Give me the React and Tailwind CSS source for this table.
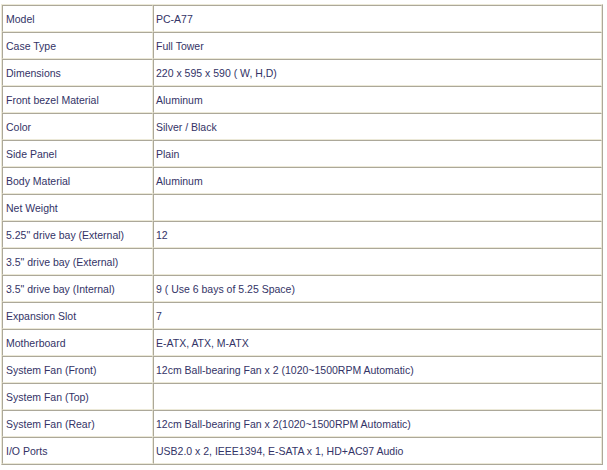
import React from 'react'

const specs = [
    ['Model', 'PC-A77'],
    ['Case Type', 'Full Tower'],
    ['Dimensions', '220 x 595 x 590 ( W, H,D)'],
    ['Front bezel Material', 'Aluminum'],
    ['Color', 'Silver / Black'],
    ['Side Panel', 'Plain'],
    ['Body Material', 'Aluminum'],
    ['Net Weight', ''],
    ['5.25" drive bay (External)', '12'],
    ['3.5" drive bay (External)', ''],
    ['3.5" drive bay (Internal)', '9 ( Use 6 bays of 5.25 Space)'],
    ['Expansion Slot', '7'],
    ['Motherboard', 'E-ATX, ATX, M-ATX'],
    ['System Fan (Front)', '12cm Ball-bearing Fan x 2 (1020~1500RPM Automatic)'],
    ['System Fan (Top)', ''],
    ['System Fan (Rear)', '12cm Ball-bearing Fan x 2(1020~1500RPM Automatic)'],
    ['I/O Ports', 'USB2.0 x 2, IEEE1394, E-SATA x 1, HD+AC97 Audio'],
]

const cell = 'h-[27px] p-0 pl-[2px] pt-[2px] align-middle border border-t-[#aca899] border-l-[#aca899] border-b-[#ece9d8] border-r-[#ece9d8]'

const App = () => {
    return (
        <div className="bg-white min-h-[470px] pt-[4px] pl-[1px]" style={{ fontFamily: '"Liberation Sans", Arial, sans-serif' }}>
            {/* spec table */}
            <table className="w-[602px] border-separate border-spacing-0 border border-t-[#ece9d8] border-l-[#ece9d8] border-b-[#aca899] border-r-[#aca899] text-[10.5px] text-[#333366]">
                <tbody>
                    {specs.map(([label, value], index) => (
                        <tr key={index}>
                            <td className={`${cell} w-[151px] pl-[3px]`}>{label}</td>
                            <td className={cell}>{value}</td>
                        </tr>
                    ))}
                </tbody>
            </table>
        </div>
    )
}

export default App
